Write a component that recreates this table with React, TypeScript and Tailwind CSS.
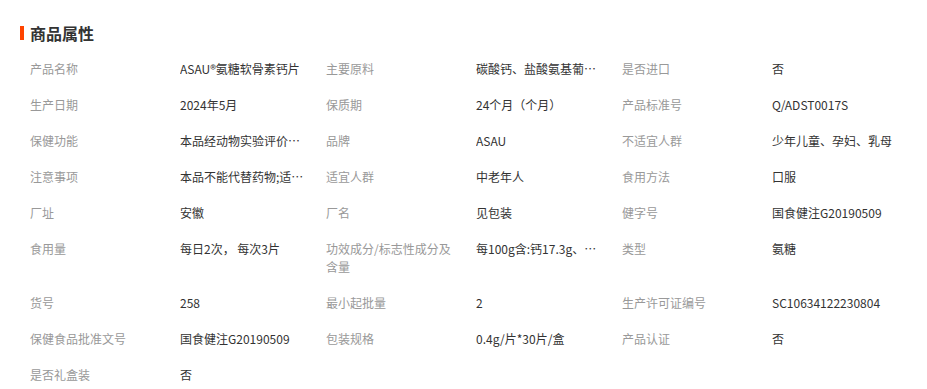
const attrs: [string, string][] = [
  ["产品名称", "ASAU®氨糖软骨素钙片"],
  ["主要原料", "碳酸钙、盐酸氨基葡萄糖、硫酸软骨素钠"],
  ["是否进口", "否"],
  ["生产日期", "2024年5月"],
  ["保质期", "24个月（个月）"],
  ["产品标准号", "Q/ADST0017S"],
  ["保健功能", "本品经动物实验评价，具有增加骨密度的保健功能"],
  ["品牌", "ASAU"],
  ["不适宜人群", "少年儿童、孕妇、乳母"],
  ["注意事项", "本品不能代替药物;适宜人群外的人群不推荐食用"],
  ["适宜人群", "中老年人"],
  ["食用方法", "口服"],
  ["厂址", "安徽"],
  ["厂名", "见包装"],
  ["健字号", "国食健注G20190509"],
  ["食用量", "每日2次， 每次3片"],
  ["功效成分/标志性成分及含量", "每100g含:钙17.3g、盐酸氨基葡萄糖"],
  ["类型", "氨糖"],
  ["货号", "258"],
  ["最小起批量", "2"],
  ["生产许可证编号", "SC10634122230804"],
  ["保健食品批准文号", "国食健注G20190509"],
  ["包装规格", "0.4g/片*30片/盒"],
  ["产品认证", "否"],
  ["是否礼盒装", "否"],
];

export default function App() {
  return (
    <div className="w-[927px] h-[389px] overflow-hidden bg-white font-['Noto_Sans_CJK_SC',sans-serif]">
      {/* Title */}
      <div className="flex items-center pl-[20px] pt-[24px]">
        <span className="w-[4px] h-[14px] bg-[#ff4400] mr-[6px]" />
        <h3 className="text-[16px] leading-[18px] font-bold text-[#333]">商品属性</h3>
      </div>

      {/* Attribute list */}
      <div className="mt-[18px] pl-[30px] grid grid-cols-[296px_296px_296px]">
        {attrs.map(([label, value]) => (
          <div key={label} className="flex pb-[18px] text-[12px] leading-[18px]">
            <div className="w-[150px] shrink-0 pr-[20px] text-[#999]">{label}</div>
            <div className="w-[126px] truncate text-[#333]">{value}</div>
          </div>
        ))}
      </div>
    </div>
  );
}
